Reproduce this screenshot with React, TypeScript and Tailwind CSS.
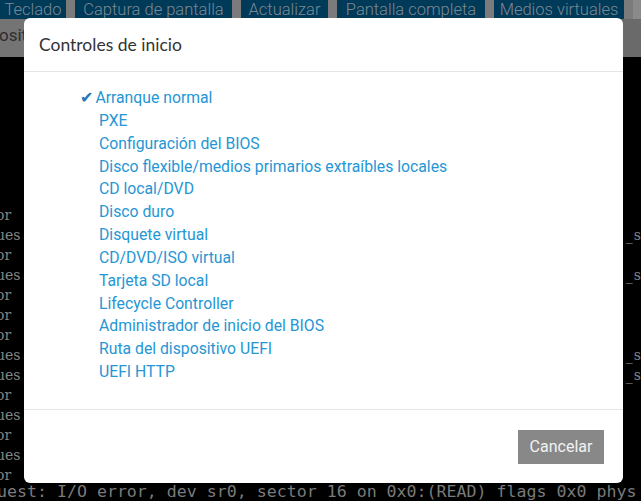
import React from 'react';

const toolbarButtons = [
  { label: 'Teclado', w: 'w-[66px]' },
  { label: 'Captura de pantalla', w: 'w-[157px]' },
  { label: 'Actualizar', w: 'w-[87px]' },
  { label: 'Pantalla completa', w: 'w-[148px]' },
  { label: 'Medios virtuales', w: 'w-[130px]' },
];

// console line fragments that peek out from behind the dialog
const consoleLines: { left: string; right?: string }[] = [
  { left: 'or' },
  { left: 'ues', right: '_s' },
  { left: 'or' },
  { left: 'ues', right: '_s' },
  { left: 'or' },
  { left: 'or' },
  { left: 'or' },
  { left: 'ues', right: '_s' },
  { left: 'ues', right: '_s' },
  { left: 'or' },
  { left: 'ues' },
  { left: 'or' },
  { left: 'ues' },
  { left: 'or' },
];

const bootOptions = [
  'Arranque normal',
  'PXE',
  'Configuración del BIOS',
  'Disco flexible/medios primarios extraíbles locales',
  'CD local/DVD',
  'Disco duro',
  'Disquete virtual',
  'CD/DVD/ISO virtual',
  'Tarjeta SD local',
  'Lifecycle Controller',
  'Administrador de inicio del BIOS',
  'Ruta del dispositivo UEFI',
  'UEFI HTTP',
];

export default function App() {
  const selected = 'Arranque normal';

  return (
    <div className="relative w-[641px] h-[501px] overflow-hidden bg-black flex flex-col">
      {/* Toolbar (dimmed by backdrop) */}
      <div className="h-[19px] shrink-0 bg-[#7b7b7b] flex gap-[9px] font-['Roboto',sans-serif]">
        {toolbarButtons.map((b) => (
          <div
            key={b.label}
            className={`${b.w} h-full bg-[#003a59] text-[#7c8891] text-[16.5px] font-light leading-[19px] flex items-end justify-center whitespace-nowrap overflow-hidden`}
          >
            {b.label}
          </div>
        ))}
        <div className="flex-1 bg-[#8a8a8a]" />
      </div>

      {/* Second row */}
      <div className="h-[38px] shrink-0 bg-gradient-to-r from-[#747474] to-[#6a6a6a] flex items-center font-['Roboto',sans-serif] text-[17px] text-[#2e2e2e] whitespace-nowrap">
        <span className="ml-[-1px] -mt-[4px]">ositivo de arranque</span>
      </div>

      {/* Console */}
      <div className="flex-1 flex flex-col pt-[148px] text-[#858585]">
        {consoleLines.map((l, i) => (
          <div key={i} className="h-[20px] flex justify-between items-center font-['DejaVu_Serif',serif] text-[14px] leading-[20px]">
            <span className="ml-[-4px]">{l.left}</span>
            {l.right && <span className="mr-[-1px] text-[14px] tracking-[1px]">{l.right}</span>}
          </div>
        ))}
        <div className="ml-[-3px] mt-[-2px] whitespace-nowrap font-['DejaVu_Sans_Mono',monospace] text-[16.6px] leading-[18px] text-[#7a7a7a]">
          uest: I/O error, dev sr0, sector 16 on 0x0:(READ) flags 0x0 phys
        </div>
      </div>

      {/* Modal */}
      <div className="absolute left-[24px] top-[18px] w-[599px] bg-white rounded-[6px] flex flex-col">
        <div className="px-[15px] py-[15px] border-b border-[#e5e5e5]">
          <h4 className="font-['Lato',sans-serif] text-[17.5px] leading-[23px] text-[#333333]">Controles de inicio</h4>
        </div>
        <div className="pt-[15px] pb-[25px] pl-[55px] pr-[15px]">
          <ul className="font-['Roboto',sans-serif] text-[15.75px] leading-[22.85px] text-[#2596d4]">
            {bootOptions.map((opt) =>
              opt === selected ? (
                <li key={opt} className="pl-[1px] whitespace-nowrap">
                  <span className="text-[#1f78b8] text-[16px] font-['DejaVu_Sans',sans-serif] mr-[2px]">✔</span>
                  {opt}
                </li>
              ) : (
                <li key={opt} className="pl-[20px] whitespace-nowrap">
                  {opt}
                </li>
              )
            )}
          </ul>
        </div>
        <div className="border-t border-[#e5e5e5] pt-[20px] pb-[19px] pr-[19px] flex justify-end">
          <button className="w-[86px] h-[34px] bg-[#888888] text-[#f2f2f2] font-['Roboto',sans-serif] text-[16px]">
            Cancelar
          </button>
        </div>
      </div>
    </div>
  );
}
